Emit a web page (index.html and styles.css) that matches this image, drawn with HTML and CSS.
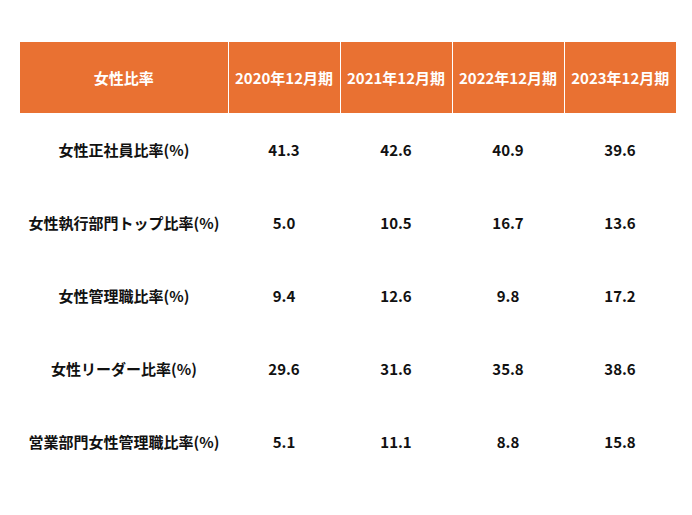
FILE: index.html
```html
<!DOCTYPE html>
<html lang="ja">
<head>
<meta charset="utf-8">
<link rel="stylesheet" href="styles.css">
</head>
<body>
<div class="page">
<table class="ratio">
  <colgroup>
    <col class="c-label"><col class="c-year"><col class="c-year"><col class="c-year"><col class="c-year">
  </colgroup>
  <thead>
    <tr>
      <th>女性比率</th>
      <th>2020年12月期</th>
      <th>2021年12月期</th>
      <th>2022年12月期</th>
      <th>2023年12月期</th>
    </tr>
  </thead>
  <tbody>
    <tr><td>女性正社員比率(%)</td><td>41.3</td><td>42.6</td><td>40.9</td><td>39.6</td></tr>
    <tr><td>女性執行部門トップ比率(%)</td><td>5.0</td><td>10.5</td><td>16.7</td><td>13.6</td></tr>
    <tr><td>女性管理職比率(%)</td><td>9.4</td><td>12.6</td><td>9.8</td><td>17.2</td></tr>
    <tr><td>女性リーダー比率(%)</td><td>29.6</td><td>31.6</td><td>35.8</td><td>38.6</td></tr>
    <tr><td>営業部門女性管理職比率(%)</td><td>5.1</td><td>11.1</td><td>8.8</td><td>15.8</td></tr>
  </tbody>
</table>
</div>
</body>
</html>
```
FILE: styles.css
```css
html, body {
  margin: 0;
  padding: 0;
  background: #ffffff;
}
.page {
  padding: 42px 16px 0 20px;
}
.ratio {
  border-collapse: collapse;
  table-layout: fixed;
  width: 656px;
  font-family: "Noto Sans CJK JP", "Noto Sans", sans-serif;
  font-weight: bold;
  font-size: 15px;
}
.c-label { width: 208px; }
.c-year { width: 112px; }
.ratio th {
  background: #e97132;
  color: #ffffff;
  height: 71px;
  padding: 0;
  text-align: center;
  vertical-align: middle;
  border-left: 1px solid #ffffff;
  border-right: 1px solid #ffffff;
  box-sizing: border-box;
}
.ratio th:first-child { border-left: none; }
.ratio th:last-child { border-right: none; }
.ratio td {
  height: 73px;
  padding: 0;
  text-align: center;
  vertical-align: middle;
  color: #111111;
}
```
